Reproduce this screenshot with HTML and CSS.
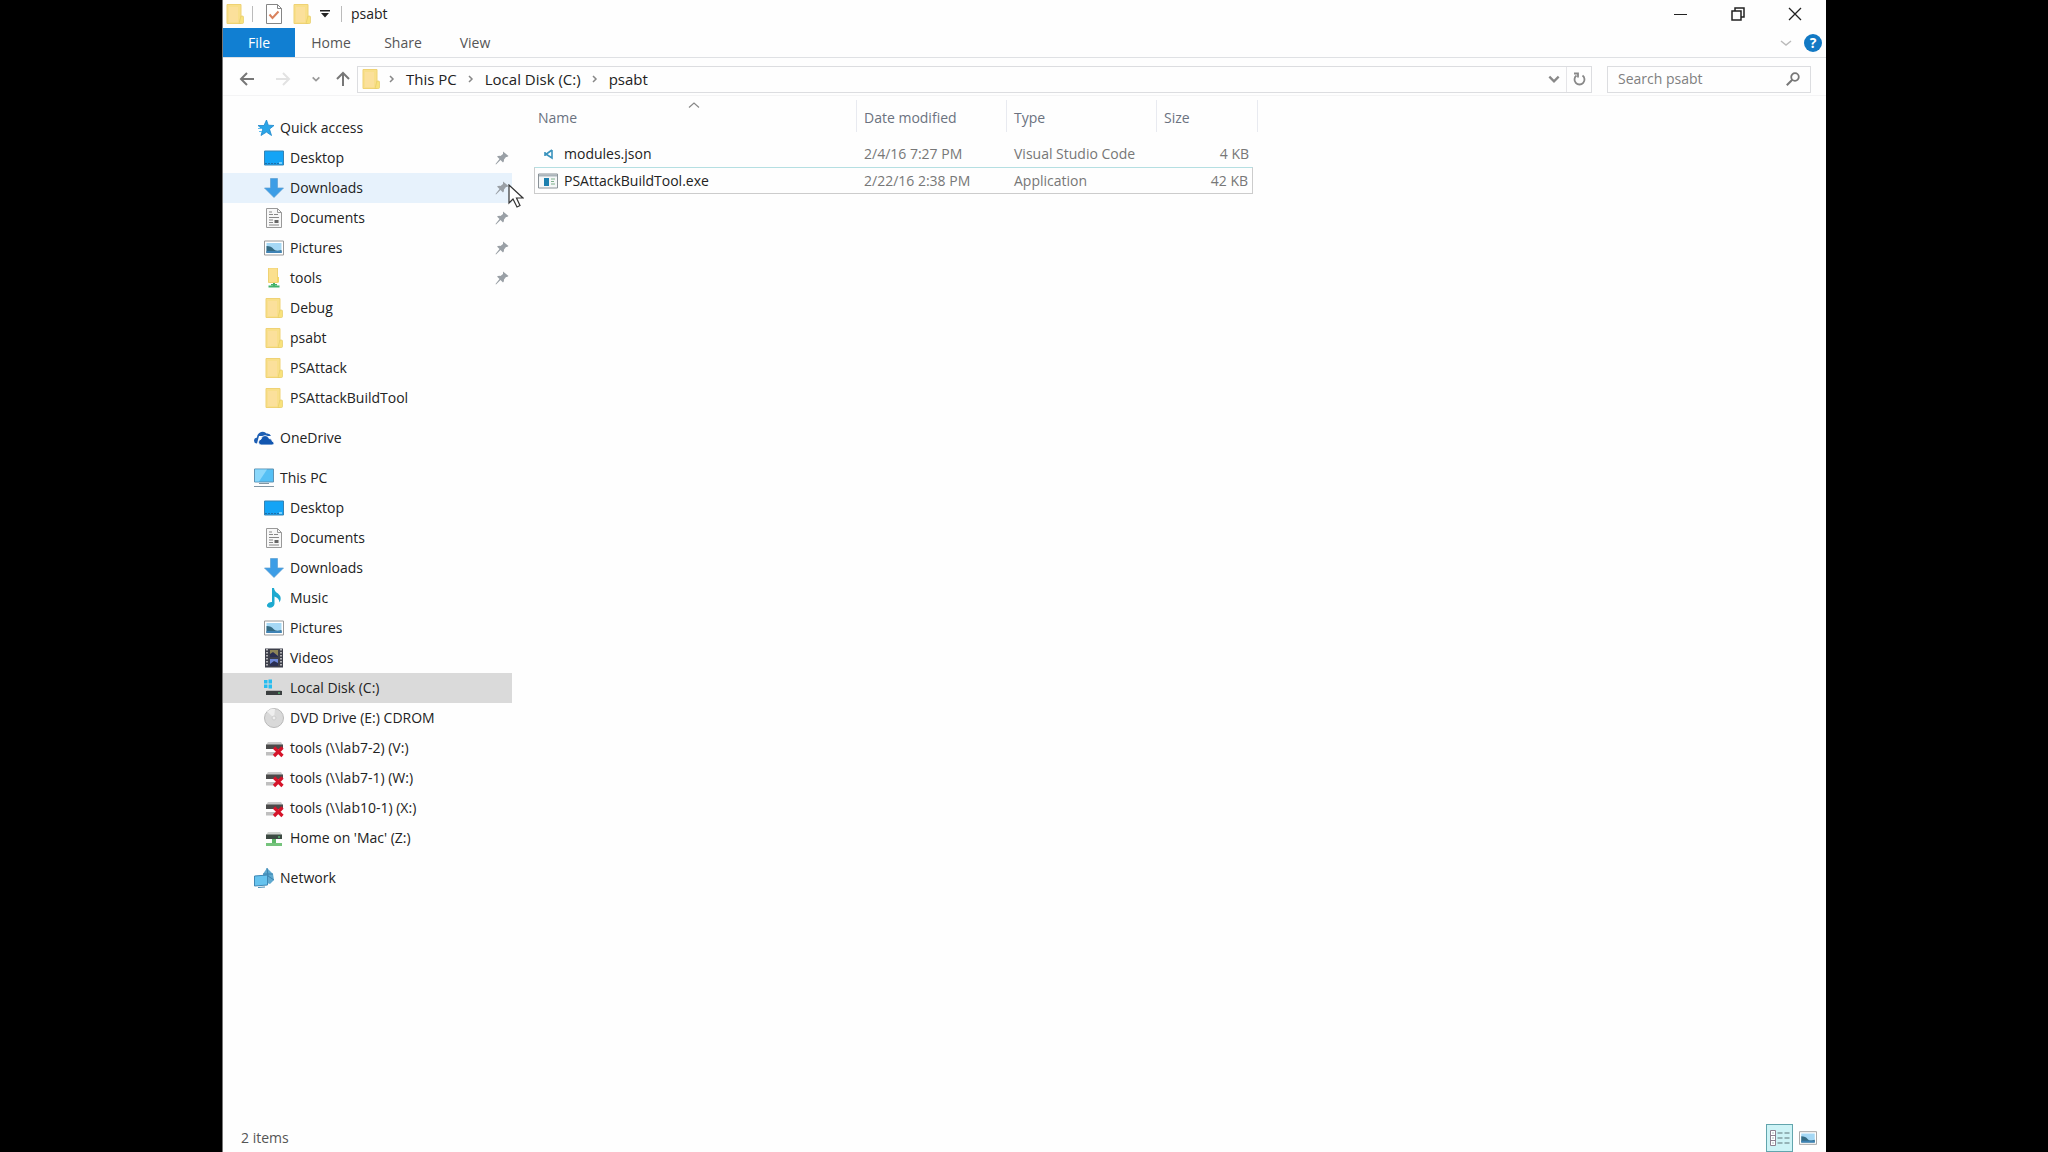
FILE: index.html
```html
<!DOCTYPE html>
<html lang="en">
<head>
    <meta charset="UTF-8">
    <meta name="viewport" content="width=device-width, initial-scale=1.0">
    <title>psabt</title>
    <link rel="stylesheet" href="styles.css">
</head>
<body>
    <!-- Shared icons -->
    <svg class="sprite" aria-hidden="true">
        <symbol id="i-folder" viewBox="0 0 20 20">
            <path d="M2 .5h14v19H2z" fill="#f8df8a" stroke="#efd274"/>
            <path d="M4 3h9v15H4z" fill="#fbe09b"/>
            <path d="M16 12h1.500q1 0 1 1v5.500q0 1-1 1H14z" fill="#f8e27c" stroke="#e6cc68" stroke-width=".7"/>
        </symbol>
        <symbol id="i-netfolder" viewBox="0 0 20 20">
            <path d="M4.500 0h9v14.500h-9z" fill="#fbe08e" stroke="#efd274"/>
            <path d="M13 9h2v5.500h-2z" fill="#f3d668"/>
            <path d="M9 15h2v3H9zM4.500 17.500h11v2h-11z" fill="#43b36b"/>
            <path d="M7 16h6v1.500H7z" fill="#43b36b"/>
        </symbol>
        <symbol id="i-star" viewBox="0 0 20 20">
            <path d="M12.500 2l1.800 5.200 5.700.3-4.500 3.600 2 6.400-5-3.400-5.500 3.400 1.700-6L4 7.500h6z" fill="#2aa5e8" stroke="#1c86cc" stroke-width=".8"/>
            <path d="M4 10.500h4M5 13.500h3" stroke="#5bbcf0"/>
        </symbol>
        <symbol id="i-desktop" viewBox="0 0 20 20">
            <path d="M.5 3h19v14H.5z" fill="#14a4f6" stroke="#3583b4"/>
            <path d="M1 15.500h18" stroke="#1c6faa" stroke-dasharray="2 1"/>
            <path d="M15 14h3v2h-3z" fill="#7ad0fb"/>
        </symbol>
        <symbol id="i-downloads" viewBox="0 0 20 20">
            <path d="M6.500.5h7v9.500h6L10 19.500.5 10h6z" fill="#3c9de6" stroke="#5b9fd0" stroke-width=".7"/>
        </symbol>
        <symbol id="i-documents" viewBox="0 0 20 20">
            <path d="M2.500.5h11l4 4v15h-15z" fill="#f8f8f8" stroke="#999"/>
            <path d="M13.500.5v4h4" fill="none" stroke="#999"/>
            <path d="M5 4h3M5 6.500h4m1 0h4M5 9.500h10M5 12h4M5 14.500h4M5 17h10" stroke="#888"/>
            <path d="M10.500 12h4v3h-4z" fill="#666"/>
        </symbol>
        <symbol id="i-pictures" viewBox="0 0 20 20">
            <path d="M.5 3h19v14H.5z" fill="#fff" stroke="#9a9a9a"/>
            <path d="M2.500 5h15v10h-15z" fill="#a5d8f5"/>
            <path d="M2.500 8q5 0 7 3t8 1v3h-15z" fill="#356b83"/>
            <path d="M2.500 13h15v2h-15z" fill="#3f83b5"/>
        </symbol>
        <symbol id="i-cloud" viewBox="0 0 20 20">
            <path d="M3 15.500q-3 0-3-3 0-2.500 3-3 0-4 4-5.500 3.500-1 5.500 1.500 3.500-.5 4.500 2.500H5z" fill="#1d5fb4"/>
            <path d="M7 17q-2.500-.3-2.500-2.800T7 11.300Q7.500 7.500 11 7.500q3 0 4 3 3.200 0 3.200 2.800Q20 13.700 20 15.200 20 17 18 17z" fill="#1256b0" stroke="#fff" stroke-width=".8"/>
        </symbol>
        <symbol id="i-pc" viewBox="0 0 20 20">
            <path d="M.5 1h19v13H.5z" fill="#55c0f5" stroke="#5f93b3"/>
            <path d="M1 1.500h12L5 13.500H1z" fill="#8bd8fb"/>
            <path d="M5 15.500h10M0 18.500h20" stroke="#8296a3"/>
        </symbol>
        <symbol id="i-music" viewBox="0 0 20 20">
            <path d="M8 0h2q.5 3.500 4 5.500 4.500 4 1.500 9-.3-4.500-5-6V16q-1 4-5 3.800-3-.6-2.500-3Q4.500 13.500 8 14z" fill="#1da9cf"/>
        </symbol>
        <symbol id="i-videos" viewBox="0 0 20 20">
            <path d="M1 .5h18v19H1z" fill="#3d3f4a"/>
            <path d="M3 1v18M17 1v18" stroke="#dadada" stroke-width="1.500" stroke-dasharray="1.500 1.500"/>
            <path d="M6 2h8v7H6z" fill="#8d8559"/>
            <path d="M6 11h8v7H6z" fill="#6d87d8"/>
            <path d="M6 6l3-2 5 4v1H6zM6 16l4-3 4 2v3H6z" fill="#292e52"/>
        </symbol>
        <symbol id="i-disk" viewBox="0 0 20 20">
            <path d="M0 2h3.500v3.500H0zM4.500 1.500H8v4H4.500zM0 6.500h3.500V10H0zM4.500 6.500H8v4H4.500z" fill="#26bdf0"/>
            <path d="M3 12h14l1 1.500H2z" fill="#b5b5b5"/>
            <path d="M2 13h16v4H2z" fill="#3b3f40"/>
            <path d="M14 15h2" stroke="#59e07d"/>
        </symbol>
        <symbol id="i-dvd" viewBox="0 0 20 20">
            <circle cx="10" cy="10" r="9.500" fill="#d9d9d9" stroke="#b9b9b9"/>
            <path d="M10 10L3 3.500A9 9 0 0 1 11 1z" fill="#eee"/>
            <circle cx="10" cy="10" r="2" fill="#eee" stroke="#ccc"/>
        </symbol>
        <symbol id="i-offline" viewBox="0 0 20 20">
            <path d="M4 4h13l2 3H2z" fill="#c9c9c9"/>
            <path d="M2 6.500h17v4.500H2z" fill="#4b4b4b"/>
            <path d="M2 14h9v3.500H2z" fill="#bfbfbf"/>
            <path d="M10 9.500l8.500 8.500M18.500 9.500L10 18" stroke="#d5142a" stroke-width="3.200"/>
        </symbol>
        <symbol id="i-netdrive" viewBox="0 0 20 20">
            <path d="M4 4h12l2 3H2z" fill="#cfd3cf"/>
            <path d="M2 6.500h16V11H2z" fill="#3c4a42"/>
            <path d="M14 9h2" stroke="#69ef8c"/>
            <path d="M8 11h4v4H8z" fill="#5eb868"/>
            <path d="M2 15h16v3H2z" fill="#75c37c"/>
        </symbol>
        <symbol id="i-network" viewBox="0 0 20 20">
            <path d="M13 0l6 6 1 6-4 4-6-2-1-8z" fill="#5fa9cf"/>
            <path d="M13 0l1 8 6 4M9 6l10 0" fill="none" stroke="#3b84b0"/>
            <path d="M.5 8l13-1v10l-13 1z" fill="#66c3ee" stroke="#3f88b5"/>
            <path d="M4 19.500l7-.5" stroke="#468cb5"/>
        </symbol>
        <symbol id="i-pin" viewBox="0 0 14 14">
            <path d="M8 .5L13.500 5l-1.500 1h-1L9 8.500q.3 2-1 3L5.500 9 1 13.500.5 13 4.500 8 2 5.500q1.500-1 3.500-.5L8 3z" fill="#9aa0a6"/>
        </symbol>
        <symbol id="i-right" viewBox="0 0 8 8">
            <path d="M2 1l3 3-3 3" fill="none" stroke="currentColor" stroke-width="1.500"/>
        </symbol>
        <symbol id="i-down" viewBox="0 0 12 12">
            <path d="M2 4l4 4 4-4" fill="none" stroke="currentColor" stroke-width="2"/>
        </symbol>
    </svg>

    <main class="window">
        <header class="titlebar">
            <svg class="icon"><use href="#i-folder"/></svg>
            <span class="divider"></span>
            <button class="quick" aria-label="Properties">
                <svg class="icon" viewBox="0 0 20 20"><path d="M2.500.5h11l4 4v15h-15z" fill="#fff" stroke="#858585"/><path d="M13.500.5v4h4" fill="none" stroke="#858585"/><path d="M5.500 10.500l3 3.500 6-6.500" fill="none" stroke="#d9825e" stroke-width="2"/></svg>
            </button>
            <button class="quick" aria-label="New folder">
                <svg class="icon"><use href="#i-folder"/></svg>
            </button>
            <button class="quick customize" aria-label="Customize Quick Access Toolbar">
                <svg width="10" height="8" viewBox="0 0 10 8"><path d="M0 0h10v1.500H0zM1 3h8L5 7.500z" fill="#222"/></svg>
            </button>
            <span class="divider"></span>
            <h1 class="title">psabt</h1>
            <div class="window-controls">
                <button aria-label="Minimize"><svg width="14" height="14" viewBox="0 0 14 14"><path d="M0 7.500h13" stroke="#222"/></svg></button>
                <button aria-label="Restore"><svg width="14" height="14" viewBox="0 0 14 14"><path d="M1 4h9v9H1zM4 4V1h9v9h-3" fill="none" stroke="#222" stroke-width="1.500"/></svg></button>
                <button aria-label="Close"><svg width="14" height="14" viewBox="0 0 14 14"><path d="M1 1l12 12M13 1L1 13" stroke="#222" stroke-width="1.300"/></svg></button>
            </div>
        </header>

        <nav class="ribbon" aria-label="Ribbon">
            <button class="tab file">File</button>
            <button class="tab">Home</button>
            <button class="tab">Share</button>
            <button class="tab">View</button>
            <button class="expand" aria-label="Expand the Ribbon"><svg width="12" height="12" viewBox="0 0 12 12"><path d="M1 4l5 4 5-4" fill="none" stroke="#bbb" stroke-width="1.500"/></svg></button>
            <button class="help" aria-label="Help">?</button>
        </nav>

        <div class="navbar">
            <div class="history">
                <button aria-label="Back"><svg width="16" height="16" viewBox="0 0 16 16"><path d="M15 8H2M8 2L2 8l6 6" fill="none" stroke="#777" stroke-width="2"/></svg></button>
                <button aria-label="Forward" disabled><svg width="16" height="16" viewBox="0 0 16 16"><path d="M1 8h13M8 2l6 6-6 6" fill="none" stroke="#e2e2e2" stroke-width="2"/></svg></button>
                <button class="recent" aria-label="Recent locations"><svg width="10" height="10" viewBox="0 0 12 12"><use href="#i-down"/></svg></button>
                <button class="up" aria-label="Up"><svg width="16" height="16" viewBox="0 0 16 16"><path d="M8 15V2M2 8l6-6 6 6" fill="none" stroke="#777" stroke-width="2"/></svg></button>
            </div>
            <div class="address">
                <svg class="icon"><use href="#i-folder"/></svg>
                <svg class="sep first"><use href="#i-right"/></svg>
                <a href="#">This PC</a>
                <svg class="sep"><use href="#i-right"/></svg>
                <a href="#">Local Disk (C:)</a>
                <svg class="sep"><use href="#i-right"/></svg>
                <a href="#">psabt</a>
                <button class="previous" aria-label="Previous locations"><svg width="14" height="14"><use href="#i-down"/></svg></button>
                <button class="refresh" aria-label="Refresh"><svg width="14" height="14" viewBox="0 0 14 14"><path d="M10.500 3.500a5 5 0 1 1-6 0M2 1.500h4v4" fill="none" stroke="#888" stroke-width="1.800"/></svg></button>
            </div>
            <div class="search">
                <input type="text" placeholder="Search psabt" aria-label="Search psabt">
                <svg width="14" height="14" viewBox="0 0 14 14"><circle cx="9" cy="5" r="3.800" fill="none" stroke="#777" stroke-width="1.800"/><path d="M6.500 7.500L.8 13.200" stroke="#777" stroke-width="2"/></svg>
            </div>
        </div>

        <div class="content">
            <nav class="sidebar" aria-label="Navigation pane">
                <div class="group">
                    <a class="root" href="#"><svg class="icon"><use href="#i-star"/></svg>Quick access</a>
                    <a href="#"><svg class="icon"><use href="#i-desktop"/></svg>Desktop<svg class="pin"><use href="#i-pin"/></svg></a>
                    <a class="hover" href="#"><svg class="icon"><use href="#i-downloads"/></svg>Downloads<svg class="pin"><use href="#i-pin"/></svg>
                        <svg class="cursor" viewBox="0 0 16 24"><path d="M1 1v18l4-4 4 8 3-1.500-3.500-7.500H15z" fill="#fff" stroke="#333" stroke-width="1.200"/></svg>
                    </a>
                    <a href="#"><svg class="icon"><use href="#i-documents"/></svg>Documents<svg class="pin"><use href="#i-pin"/></svg></a>
                    <a href="#"><svg class="icon"><use href="#i-pictures"/></svg>Pictures<svg class="pin"><use href="#i-pin"/></svg></a>
                    <a href="#"><svg class="icon"><use href="#i-netfolder"/></svg>tools<svg class="pin"><use href="#i-pin"/></svg></a>
                    <a href="#"><svg class="icon"><use href="#i-folder"/></svg>Debug</a>
                    <a href="#"><svg class="icon"><use href="#i-folder"/></svg>psabt</a>
                    <a href="#"><svg class="icon"><use href="#i-folder"/></svg>PSAttack</a>
                    <a href="#"><svg class="icon"><use href="#i-folder"/></svg>PSAttackBuildTool</a>
                </div>
                <div class="group">
                    <a class="root" href="#"><svg class="icon"><use href="#i-cloud"/></svg>OneDrive</a>
                </div>
                <div class="group">
                    <a class="root" href="#"><svg class="icon"><use href="#i-pc"/></svg>This PC</a>
                    <a href="#"><svg class="icon"><use href="#i-desktop"/></svg>Desktop</a>
                    <a href="#"><svg class="icon"><use href="#i-documents"/></svg>Documents</a>
                    <a href="#"><svg class="icon"><use href="#i-downloads"/></svg>Downloads</a>
                    <a href="#"><svg class="icon"><use href="#i-music"/></svg>Music</a>
                    <a href="#"><svg class="icon"><use href="#i-pictures"/></svg>Pictures</a>
                    <a href="#"><svg class="icon"><use href="#i-videos"/></svg>Videos</a>
                    <a class="selected" href="#"><svg class="icon"><use href="#i-disk"/></svg>Local Disk (C:)</a>
                    <a href="#"><svg class="icon"><use href="#i-dvd"/></svg>DVD Drive (E:) CDROM</a>
                    <a href="#"><svg class="icon"><use href="#i-offline"/></svg>tools (\\lab7-2) (V:)</a>
                    <a href="#"><svg class="icon"><use href="#i-offline"/></svg>tools (\\lab7-1) (W:)</a>
                    <a href="#"><svg class="icon"><use href="#i-offline"/></svg>tools (\\lab10-1) (X:)</a>
                    <a href="#"><svg class="icon"><use href="#i-netdrive"/></svg>Home on 'Mac' (Z:)</a>
                </div>
                <div class="group">
                    <a class="root" href="#"><svg class="icon"><use href="#i-network"/></svg>Network</a>
                </div>
            </nav>

            <section class="files">
                <table>
                    <thead>
                        <tr>
                            <th class="name">Name<svg class="sort" viewBox="0 0 12 6"><path d="M1 5.500l5-4.500 5 4.500" fill="none" stroke="#888" stroke-width="1.200"/></svg></th>
                            <th class="date">Date modified</th>
                            <th class="type">Type</th>
                            <th class="size">Size</th>
                        </tr>
                    </thead>
                    <tbody>
                        <tr>
                            <td><span class="file-name"><svg class="icon" viewBox="0 0 20 20"><path d="M14 6v8L7 9.500M14 6L7 11M7 8v4" fill="none" stroke="#3a93bd" stroke-width="1.600"/></svg>modules.json</span></td>
                            <td>2/4/16 7:27 PM</td>
                            <td>Visual Studio Code</td>
                            <td class="number">4 KB</td>
                        </tr>
                        <tr class="focused">
                            <td><span class="file-name"><svg class="icon" viewBox="0 0 20 20"><path d="M.5 3h19v14H.5z" fill="#f5f7f8" stroke="#8a9298"/><path d="M1 4.500h18" stroke="#aab4ba" stroke-width="2"/><path d="M6 7h5v8H6z" fill="#1c7fae"/><path d="M13 8h4M13 10.500h3M13 13h4" stroke="#7fb08c"/></svg>PSAttackBuildTool.exe</span></td>
                            <td>2/22/16 2:38 PM</td>
                            <td>Application</td>
                            <td class="number">42 KB</td>
                        </tr>
                    </tbody>
                </table>
            </section>
        </div>

        <footer class="statusbar">
            <span>2 items</span>
            <div class="views">
                <button class="view active" aria-label="Details view"><svg width="20" height="18" viewBox="0 0 20 18"><path d="M.5 1.500h5v15h-5zM.5 6.500h5M.5 11.500h5" fill="#fff" stroke="#8d8090"/><path d="M2.500 4h1M2.500 9h1M2.500 14h1M7.500 4h5m2 0h5M7.500 9h5m2 0h5M7.500 14h5m2 0h5" stroke="#5e7478" stroke-width="1.200"/></svg></button>
                <button class="view" aria-label="Large icons view"><svg width="18" height="18" viewBox="0 0 20 20"><use href="#i-pictures"/></svg></button>
            </div>
        </footer>
    </main>
</body>
</html>
```

FILE: styles.css
```css
* {
    box-sizing: border-box;
}
body {
    margin: 0;
    padding: 0 222px;
    background-color: #000;
    color: #222;
    font-family: "Open Sans", "Noto Sans", sans-serif;
    font-size: 14px;
    line-height: 20px;
}
button {
    display: flex;
    align-items: center;
    justify-content: center;
    padding: 0;
    border: 0;
    background: none;
    color: inherit;
    font: inherit;
}
a {
    color: inherit;
    text-decoration: none;
}
svg {
    display: block;
    flex: none;
}
.sprite {
    position: absolute;
    width: 0;
    height: 0;
}
.icon {
    width: 20px;
    height: 20px;
}
.window {
    display: flex;
    flex-direction: column;
    min-height: 100vh;
    background-color: #fefefe;
    border-left: 1px solid #777;
}

/* Title bar */
.titlebar {
    display: flex;
    align-items: center;
    height: 28px;
    padding-left: 2px;
}
.divider {
    width: 1px;
    height: 16px;
    margin: 0 7px;
    background-color: #bbb;
}
.quick {
    width: 28px;
    height: 28px;
}
.customize {
    width: 18px;
}
.title {
    margin: 0 0 0 2px;
    font-size: 14px;
    font-weight: normal;
}
.window-controls {
    display: flex;
    margin-right: 3px;
    margin-left: auto;
}
.window-controls button {
    width: 57px;
    height: 26px;
}

/* Ribbon tabs */
.ribbon {
    display: flex;
    align-items: center;
    height: 30px;
    padding-right: 4px;
    border-bottom: 1px solid #dfe1e4;
    color: #555;
}
.tab {
    width: 72px;
    height: 29px;
}
.tab.file {
    background-color: #117fd2;
    color: #fff;
}
.expand {
    width: 20px;
    height: 20px;
    margin-left: auto;
}
.help {
    width: 18px;
    height: 18px;
    margin-left: 8px;
    border-radius: 50%;
    background-color: #1279c4;
    color: #fff;
    font-weight: bold;
}

/* Address bar and search */
.navbar {
    display: flex;
    align-items: center;
    gap: 15px;
    height: 38px;
    padding: 7px 15px 2px 0;
    border-bottom: 1px solid #f4f4f5;
}
.history {
    display: flex;
    width: 119px;
    padding-left: 16px;
    color: #999;
}
.history button {
    width: 18px;
    margin-right: 20px;
}
.history .recent {
    width: 16px;
    margin-right: 14px;
}
.history .up {
    width: 16px;
    margin-right: 0;
}
.address {
    display: flex;
    flex: 1;
    align-items: center;
    height: 27px;
    padding-left: 3px;
    border: 1px solid #dcdde0;
    font-size: 15px;
}
.sep {
    width: 8px;
    height: 8px;
    margin: 0 10px;
    color: #888;
}
.sep.first {
    margin-left: 7px;
}
.address button {
    width: 25px;
    height: 25px;
    color: #888;
}
.address .previous {
    margin-left: auto;
}
.address .refresh {
    border-left: 1px solid #e5e5e8;
}
.search {
    display: flex;
    align-items: center;
    width: 204px;
    height: 27px;
    padding: 0 10px;
    border: 1px solid #dcdde0;
}
.search input {
    flex: 1;
    min-width: 0;
    padding: 0;
    border: 0;
    outline: 0;
    background: none;
    font: inherit;
}
.search input::placeholder {
    color: #808080;
    opacity: 1;
}

/* Navigation pane */
.content {
    display: flex;
    flex: 1;
    gap: 22px;
}
.sidebar {
    display: flex;
    flex-direction: column;
    gap: 10px;
    width: 289px;
    padding-top: 17px;
}
.sidebar a {
    position: relative;
    display: flex;
    align-items: center;
    gap: 6px;
    height: 30px;
    padding: 0 3px 0 41px;
}
.sidebar a.root {
    padding-left: 31px;
}
.sidebar .hover {
    background-color: #e7f2fc;
}
.sidebar .selected {
    background-color: #dadada;
}
.pin {
    width: 14px;
    height: 14px;
    margin-left: auto;
}
.cursor {
    position: absolute;
    z-index: 1;
    top: 11px;
    left: 285px;
    width: 16px;
    height: 24px;
}

/* File list */
.files {
    padding-top: 4px;
}
table {
    width: 719px;
    border-collapse: separate;
    border-spacing: 0;
    table-layout: fixed;
    color: #777;
}
th {
    position: relative;
    height: 32px;
    padding: 4px 7px 0;
    border-right: 1px solid #e8eaf0;
    color: #6b7280;
    font-weight: normal;
    text-align: left;
}
th.name {
    width: 323px;
    padding-left: 4px;
}
th.date,
th.type {
    width: 150px;
}
th.size {
    border-right: 0;
}
/* resize handle sits just past the rows */
th.size::after {
    content: "";
    position: absolute;
    top: 0;
    right: -5px;
    width: 1px;
    height: 32px;
    background-color: #e8eaf0;
}
.sort {
    position: absolute;
    top: 2px;
    left: 154px;
    width: 12px;
    height: 6px;
}
tbody::before {
    content: "";
    display: block;
    height: 8px;
}
td {
    height: 27px;
    padding: 0 7px;
    border: 1px solid transparent;
    border-width: 1px 0;
}
td:first-child {
    padding: 0 4px;
}
td.number {
    padding-right: 4px;
    text-align: right;
}
.focused td {
    border-top-color: #b5dfe2;
    border-bottom-color: #ccc;
}
.focused td:first-child {
    padding-left: 3px;
    border-left: 1px solid #ccc;
}
.focused td:last-child {
    border-right: 1px solid #ccc;
}
.file-name {
    display: flex;
    align-items: center;
    gap: 6px;
    color: #222;
}

/* Status bar */
.statusbar {
    display: flex;
    align-items: center;
    justify-content: space-between;
    height: 28px;
    padding: 0 6px 0 18px;
    color: #555;
}
.views {
    display: flex;
    gap: 3px;
}
.view {
    width: 24px;
    height: 28px;
}
.view.active {
    width: 27px;
    border: 1px solid #62a5ad;
    background-color: #cdf3f6;
}
```
